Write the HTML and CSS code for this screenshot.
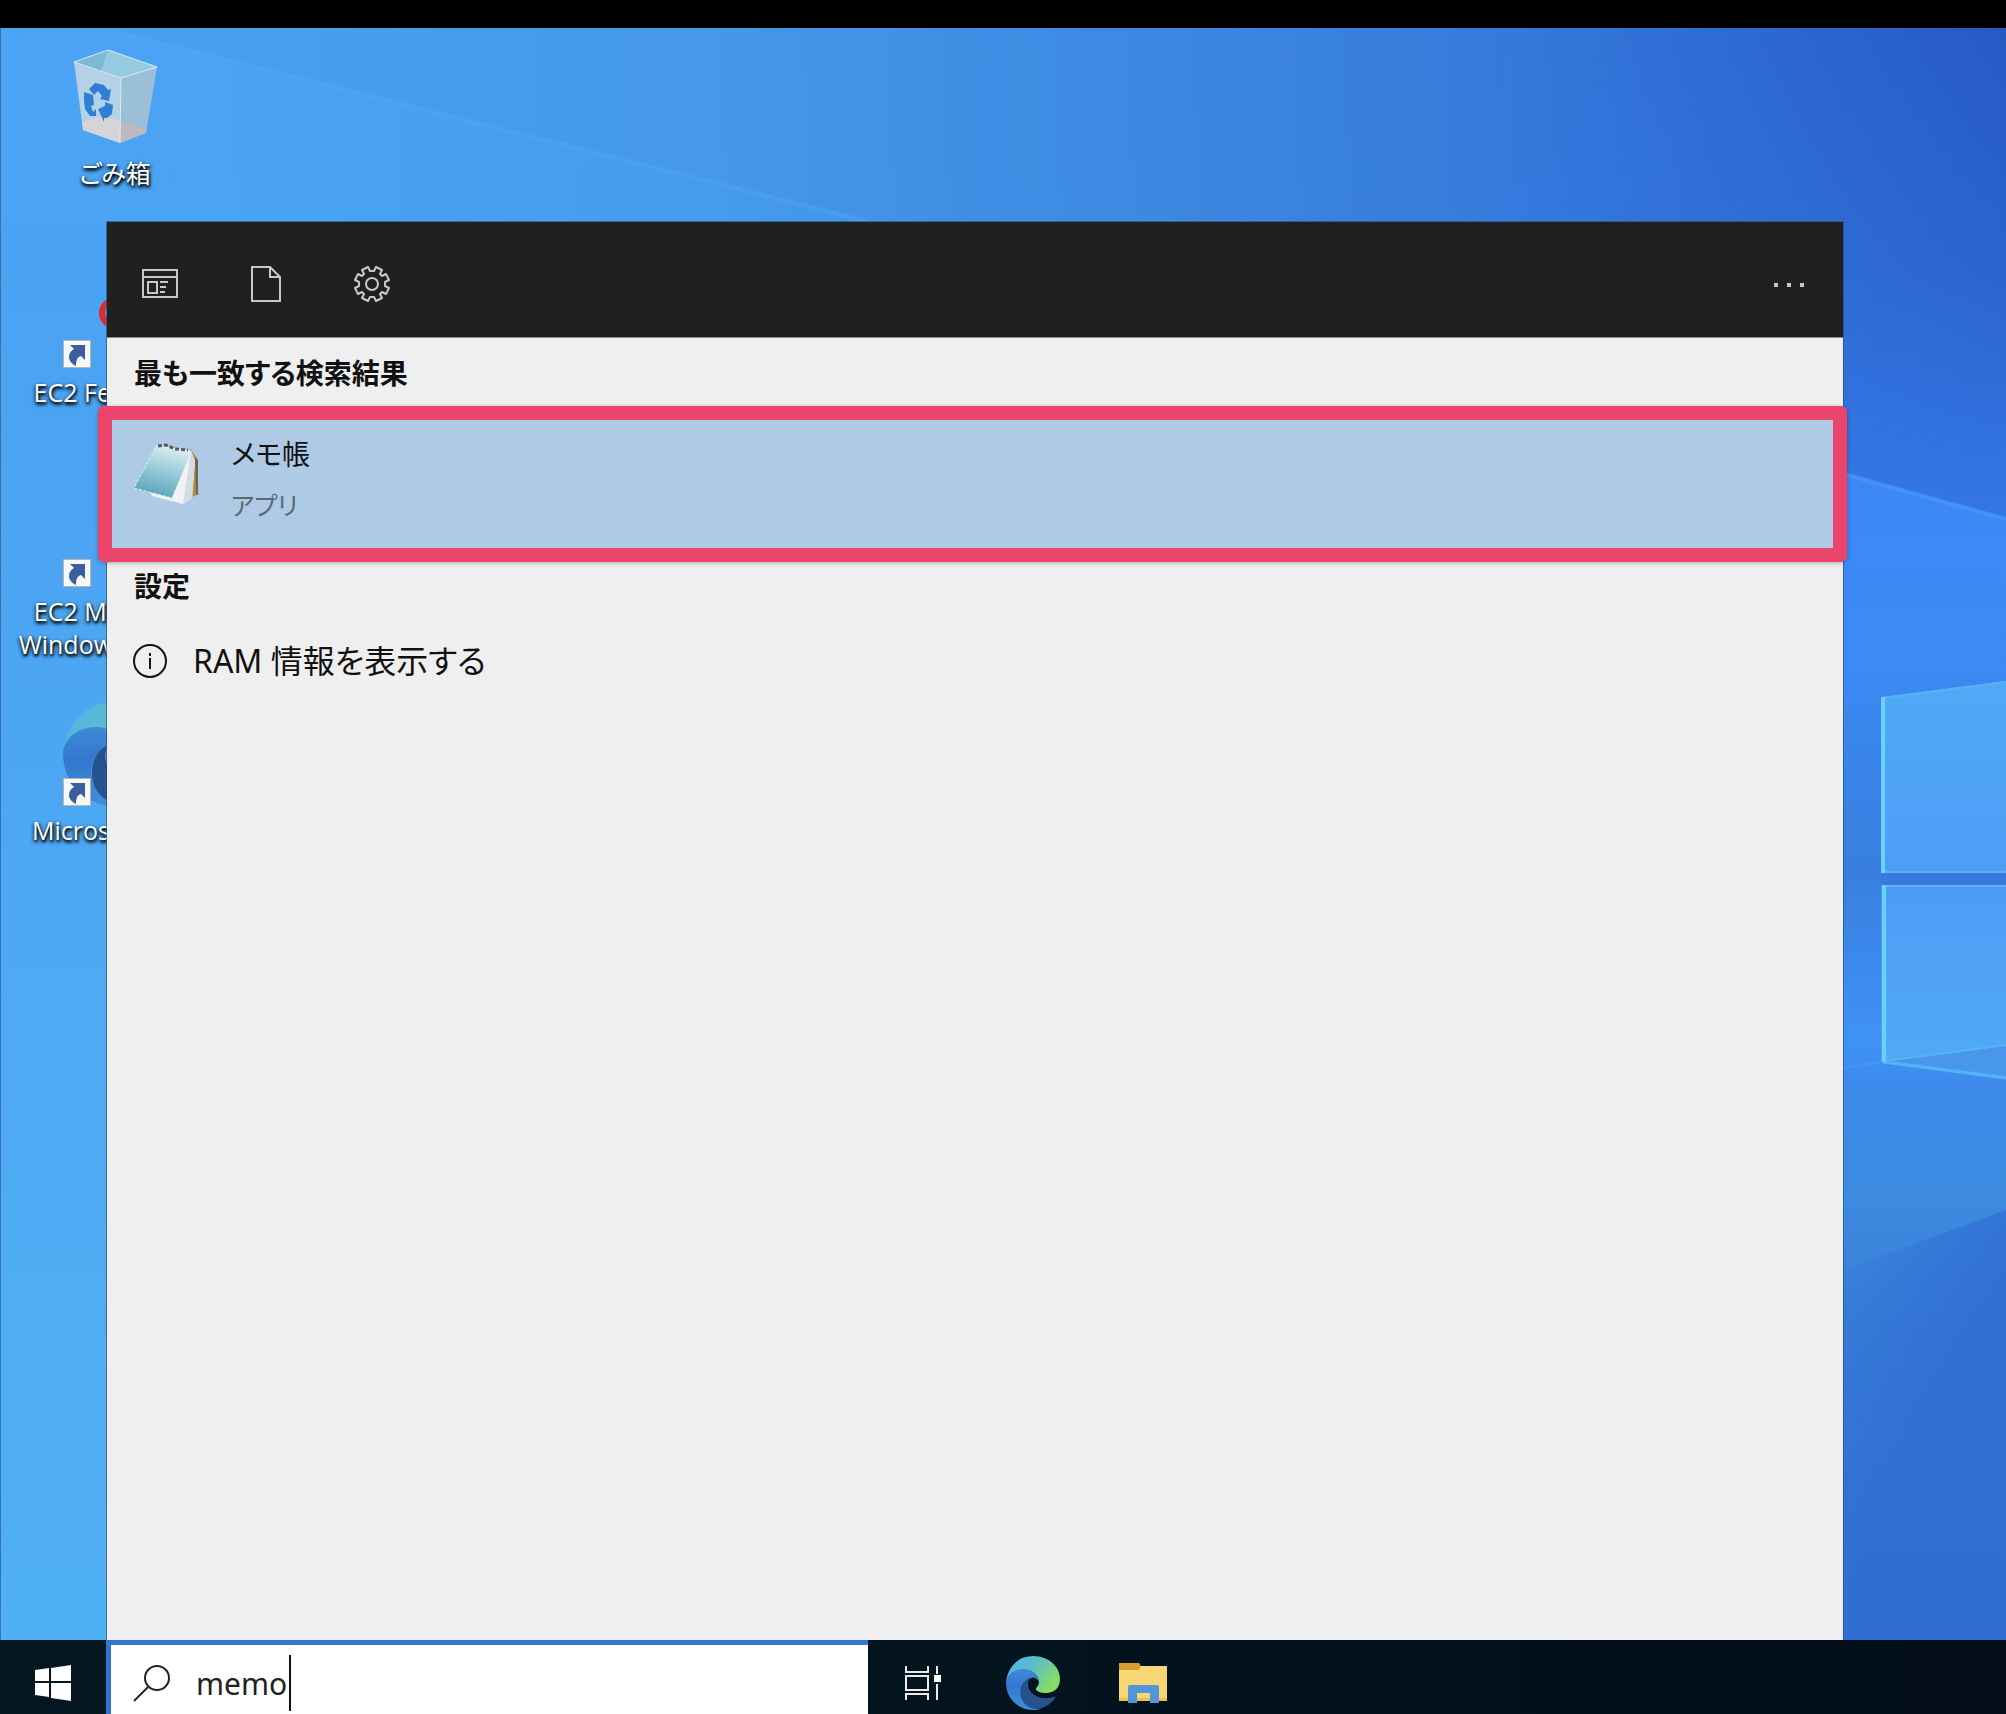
FILE: index.html
```html
<!DOCTYPE html>
<html lang="ja">
<head>
<meta charset="utf-8">
<title>メモ帳</title>
<link rel="stylesheet" href="styles.css">
</head>

<body>

<svg class="defs" aria-hidden="true">
  <defs>
    <linearGradient id="edge-top" x1="0" y1="0" x2="1" y2="0.5">
      <stop offset="0" stop-color="#4fb2f0"/>
      <stop offset="0.5" stop-color="#5cbccb"/>
      <stop offset="1" stop-color="#86dd66"/>
    </linearGradient>
    <linearGradient id="edge-left" x1="0" y1="0" x2="0" y2="1">
      <stop offset="0" stop-color="#3f8ad6"/>
      <stop offset="0.4" stop-color="#3478cf"/>
      <stop offset="1" stop-color="#3f8edd"/>
    </linearGradient>
    <symbol id="edge" viewBox="0 0 54 54">
      <path fill="url(#edge-top)" d="M0 25C3 9 13 0 27 0c16 0 27 11 27 23 0 9-6 14-14 14-6 0-10-2-10-4s3-3 3-7c0-7-7-12-16-12S3 18 0 25z"/>
      <path fill="url(#edge-left)" d="M0 27c0-8 8-14 17-14s16 6 16 13c-3-5-6-5-8-4-9 3-11 11-10 18 2 8 11 14 19 13-3 1-5 1-7 1C12 54 0 42 0 27z"/>
      <path fill="#27528f" d="M25 22c-7 2-10 8-10 15 0 9 7 17 18 16 7-2 13-6 16-11 1-1 0-2-2-1-11 4-25-2-25-13 0-3 1-5 3-6z"/>
    </symbol>
    <symbol id="shortcut" viewBox="0 0 28 28">
      <path fill="#f7f8fa" stroke="#b9b4ae" stroke-width="1" d="M.5.5h27v27H.5z"/>
      <path fill="#3c5e9f" d="M7 5h15v15l-4-4c-4 1-5 5-5 10-4-2-7-5-7-9s2-6 5-8z"/>
    </symbol>
  </defs>
</svg>

<div class="top-strip"></div>

<main class="desktop">
  <svg class="wallpaper" viewBox="0 28 2006 1612" preserveAspectRatio="none" aria-hidden="true">
    <defs>
      <linearGradient id="sky" x1="0" y1="120" x2="2006" y2="28" gradientUnits="userSpaceOnUse">
        <stop offset="0" stop-color="#4aa2f2"/>
        <stop offset="0.35" stop-color="#4598ea"/>
        <stop offset="0.6" stop-color="#3c86e0"/>
        <stop offset="0.75" stop-color="#357adb"/>
        <stop offset="0.87" stop-color="#2d69d2"/>
        <stop offset="1" stop-color="#2759c3"/>
      </linearGradient>
      <linearGradient id="sky-glow" x1="0" y1="28" x2="0" y2="520" gradientUnits="userSpaceOnUse">
        <stop offset="0" stop-color="#357be8" stop-opacity="0"/>
        <stop offset="0.5" stop-color="#357be8" stop-opacity="0.3"/>
        <stop offset="1" stop-color="#357be8" stop-opacity="0.9"/>
      </linearGradient>
      <linearGradient id="left-side" x1="0" y1="0" x2="0" y2="1">
        <stop offset="0" stop-color="#4aa2f2"/>
        <stop offset="1" stop-color="#50b0f4"/>
      </linearGradient>
      <linearGradient id="beam" x1="100" y1="0" x2="870" y2="0" gradientUnits="userSpaceOnUse">
        <stop offset="0" stop-color="#4ba6f5" stop-opacity="0.6"/>
        <stop offset="1" stop-color="#4ba6f5" stop-opacity="0.1"/>
      </linearGradient>
      <linearGradient id="right-side" x1="0" y1="440" x2="0" y2="1640" gradientUnits="userSpaceOnUse">
        <stop offset="0" stop-color="#3d87f5"/>
        <stop offset="0.18" stop-color="#3c8af4"/>
        <stop offset="0.36" stop-color="#387fdf"/>
        <stop offset="0.5" stop-color="#4092f6"/>
        <stop offset="0.54" stop-color="#3d8aec"/>
        <stop offset="0.63" stop-color="#3d8adf"/>
        <stop offset="0.75" stop-color="#387fd8"/>
        <stop offset="1" stop-color="#347ad4"/>
      </linearGradient>
      <linearGradient id="corner" x1="1843" y1="1190" x2="2006" y2="1270" gradientUnits="userSpaceOnUse">
        <stop offset="0" stop-color="#2f6bd4" stop-opacity="0"/>
        <stop offset="1" stop-color="#2f6bd4" stop-opacity="0.8"/>
      </linearGradient>
      <linearGradient id="pane" x1="0" y1="0" x2="0" y2="1">
        <stop offset="0" stop-color="#51a9f7"/>
        <stop offset="1" stop-color="#4d9df5"/>
      </linearGradient>
      <linearGradient id="pane-low" x1="0" y1="0" x2="0" y2="1">
        <stop offset="0" stop-color="#4d9bf6"/>
        <stop offset="1" stop-color="#52abf5"/>
      </linearGradient>
    </defs>
    <path fill="url(#sky)" d="M0 28h2006v1612H0z"/>
    <path fill="url(#sky-glow)" d="M1500 28h506v500h-506z"/>
    <path fill="url(#left-side)" d="M0 222h200v1418H0z"/>
    <path fill="url(#beam)" d="M0 28h100l770 194H0z"/>
    <path fill="none" stroke="#52adf8" stroke-width="4" opacity="0.35" d="M100 28l770 194"/>
    <path fill="url(#right-side)" d="M1700 436L1843 474l163 44v1122H1700z"/>
    <path fill="none" stroke="#4796fa" stroke-width="4" opacity="0.8" d="M1843 474l163 45"/>
    <path fill="url(#corner)" d="M1843 1270l163-60v430h-163z"/>
    <path fill="#3779de" d="M1881 873h125v12h-125z"/>
    <path fill="url(#pane)" d="M1881 697l125-16v192h-125z"/>
    <path fill="url(#pane-low)" d="M1881 885h125v193l-125-16z"/>
    <path fill="#4997ec" d="M1890 1061l116-15v30z"/>
    <path fill="none" stroke="#58b2f6" stroke-width="2" d="M1883 698l123-16M1884 872h122M1884 886h122M1884 1061l122-16"/>
    <path fill="none" stroke="#50b5f5" stroke-width="3" d="M1883 1062l123 16"/>
    <path fill="none" stroke="#67d3f7" stroke-width="4" d="M1883 697v176M1884 885v177"/>
    <path fill="none" stroke="#4a9af5" stroke-width="3" opacity="0.6" d="M1843 1068l38-6"/>
  </svg>

  <div class="shortcuts">
    <a class="shortcut" href="#">
      <svg class="shortcut-icon" viewBox="0 0 104 104" aria-hidden="true">
        <path fill="#b4d1e5" d="M11 17L58 33l-1 65-37-13z"/>
        <path fill="#9cbfd8" d="M58 33l36-11-11 66-26 10z"/>
        <path fill="#d6d4d8" d="M19 77l20-6 18 5v22l-37-13z"/>
        <path fill="#bcb9bf" d="M57 76l27 8-1 4-26 10z"/>
        <path fill="#7db8d8" d="M11 17L45 5l49 17-36 11z"/>
        <path fill="#94cbe0" d="M45 5l49 17-36 11-20-7z"/>
        <path fill="none" stroke="#dceaf3" stroke-width="1" d="M11 17L45 5l49 17-36 11zM58 33l-1 64"/>
        <path fill="#2f7fd6" d="M26 44l6-6 9 2 4 5 3-1-2 12-9-2 2-3-4-5-4 4zM21 47l9 3 1 10-3 1 2 6 3-3v7h-6l-5-7-1-9zM35 64l7-3v-4l8 3-1 9-5 4h-3v4z"/>
      </svg>
      <span class="shortcut-name">ごみ箱</span>
    </a>
    <a class="shortcut shortcut-covered" href="#">
      <svg class="shortcut-icon" viewBox="0 0 104 104" aria-hidden="true">
        <circle cx="52" cy="49" r="13" fill="none" stroke="#d92b35" stroke-width="6"/>
        <use href="#shortcut" x="0" y="76" width="28" height="28"/>
      </svg>
      <span class="shortcut-name">EC2 Fee</span>
    </a>
    <a class="shortcut shortcut-covered" href="#">
      <svg class="shortcut-icon" viewBox="0 0 104 104" aria-hidden="true">
        <use href="#shortcut" x="0" y="76" width="28" height="28"/>
      </svg>
      <span class="shortcut-name">EC2 Mic<br>Windows</span>
    </a>
    <a class="shortcut shortcut-covered" href="#">
      <svg class="shortcut-icon" viewBox="0 0 104 104" aria-hidden="true">
        <use href="#edge" width="104" height="104"/>
        <use href="#shortcut" x="0" y="76" width="28" height="28"/>
      </svg>
      <span class="shortcut-name">Microso</span>
    </a>
  </div>

  <section class="search-panel">
    <header class="filters">
      <button class="filter" type="button" aria-label="アプリ">
        <svg width="36" height="36" viewBox="0 0 36 36" fill="none" stroke="#c8c8c8" stroke-width="2">
          <path d="M1 4h34v27H1zM1 11h34M6 16h9v11H6zM18 16h8M18 21h6M18 26h5"/>
        </svg>
      </button>
      <button class="filter" type="button" aria-label="ドキュメント">
        <svg width="36" height="36" viewBox="0 0 36 36" fill="none" stroke="#c8c8c8" stroke-width="2">
          <path d="M4 1h18l10 10v24H4zM22 1v10h10"/>
        </svg>
      </button>
      <button class="filter" type="button" aria-label="設定">
        <svg width="36" height="36" viewBox="-18 -18 36 36" fill="none" stroke="#c8c8c8" stroke-width="2" stroke-linejoin="round">
          <path d="M2-13L4-17l6 3-2 4 2 2 4-2 3 6-4 2v4l4 2-3 6-4-2-2 2 2 4-6 3-2-4h-4l-2 4-6-3 2-4-2-2-4 2-3-6 4-2v-4l-4-2 3-6 4 2 2-2-2-4 6-3 2 4z"/>
          <circle r="6"/>
        </svg>
      </button>
      <button class="filter filter-more" type="button" aria-label="その他">
        <svg width="36" height="36" viewBox="0 0 36 36" fill="#c8c8c8">
          <path d="M2 17h4v4H2zM15 17h4v4h-4zM28 17h4v4h-4z"/>
        </svg>
      </button>
    </header>

    <h2 class="group-title">最も一致する検索結果</h2>
    <button class="best-match" type="button">
      <svg class="notepad" viewBox="0 0 68 64" aria-hidden="true">
        <defs>
          <linearGradient id="page" x1="0.6" y1="0" x2="0.3" y2="1">
            <stop offset="0" stop-color="#dceff3"/>
            <stop offset="0.5" stop-color="#94c8d6"/>
            <stop offset="1" stop-color="#55a0ba"/>
          </linearGradient>
        </defs>
        <path fill="#7f98ad" d="M47 58l21-6-8-3z" opacity="0.6"/>
        <path fill="#b98d47" d="M57 7l7 9 1 36-8 4z"/>
        <path fill="#6f6250" d="M62 15l3 3v34l-2 1z"/>
        <path fill="#f1f3f3" d="M24 3l34 6 4 10-3 37-9 6-31-8-4-8z"/>
        <path fill="#d3dde2" d="M58 9l4 10-3 37-9 6z"/>
        <path fill="url(#page)" stroke="#e1f0f2" stroke-width="1" stroke-dasharray="3 2" d="M24 3l34 8-19 45L1 46z"/>
        <path fill="none" stroke="#565b5c" stroke-width="3" stroke-dasharray="4 2" d="M25 4l8-1 9 4 13 1"/>
      </svg>
      <span class="match-text">
        <span class="match-name">メモ帳</span>
        <span class="match-kind">アプリ</span>
      </span>
      <span class="marker"></span>
    </button>

    <h2 class="group-title group-title-small">設定</h2>
    <button class="setting" type="button">
      <svg width="34" height="34" viewBox="0 0 34 34" fill="none" stroke="#111" stroke-width="2" aria-hidden="true">
        <circle cx="17" cy="17" r="16"/>
        <path d="M17 14v11M17 9v3"/>
      </svg>
      <span>RAM 情報を表示する</span>
    </button>
  </section>
</main>

<footer class="taskbar">
  <button class="start" type="button" aria-label="スタート">
    <svg width="38" height="38" viewBox="0 0 38 38" fill="#fff" aria-hidden="true">
      <path d="M1 6l14-2v13H1zM17 4l20-3v16H17zM1 19h14v14L1 31zM17 19h20v18l-20-3z"/>
    </svg>
  </button>
  <label class="search-box">
    <svg width="38" height="38" viewBox="0 0 38 38" fill="none" stroke="#222" stroke-width="2" aria-hidden="true">
      <circle cx="24" cy="14" r="12"/>
      <path d="M15 23L1 37"/>
    </svg>
    <input class="search-input" type="text" value="memo" aria-label="検索">
    <span class="caret"></span>
  </label>
  <button class="task" type="button" aria-label="タスク ビュー">
    <svg width="38" height="38" viewBox="0 0 38 38" fill="none" stroke="#e8eaec" stroke-width="2" aria-hidden="true">
      <path d="M2 2v6h22V2M2 12h22v14H2zM2 36v-6h22v6M33 2v8M33 20v16"/>
      <path fill="#fff" stroke="none" d="M30 11h7v7h-7z"/>
    </svg>
  </button>
  <button class="task" type="button" aria-label="Microsoft Edge">
    <svg width="54" height="54" aria-hidden="true"><use href="#edge"/></svg>
  </button>
  <button class="task" type="button" aria-label="エクスプローラー">
    <svg width="50" height="42" viewBox="0 0 50 42" aria-hidden="true">
      <path fill="#f8d675" d="M1 4h48v35H1z"/>
      <path fill="#f0c04e" d="M1 36h48v3H1z"/>
      <path fill="#d99c33" d="M1 1h20l2 3-2 4H1z"/>
      <path fill="#5396d8" d="M12 23h27q2 0 2 2v16h-9V31H19v10h-9V25q0-2 2-2z"/>
    </svg>
  </button>
</footer>

</body>
</html>
```

FILE: styles.css
```css
* {
  box-sizing: border-box;
}

body {
  margin: 0;
  min-height: 100vh;
  display: flex;
  flex-direction: column;
  background: #000;
  color: #111;
  font-family: "Noto Sans", "Noto Sans CJK JP", sans-serif;
  font-size: 30px;
  line-height: 40px;
  font-feature-settings: "palt";
}

button {
  margin: 0;
  padding: 0;
  border: none;
  background: none;
  color: inherit;
  font: inherit;
  font-feature-settings: inherit;
  text-align: left;
}

svg {
  display: block;
  flex: none;
}

.defs {
  position: absolute;
  width: 0;
  height: 0;
}

.top-strip {
  height: 28px;
}

/* desktop */

.desktop {
  position: relative;
  flex: 1;
  min-height: 960px;
  padding: 17px 14px;
  overflow: hidden;
  border-left: 1px solid #3973ad;
}

.wallpaper {
  position: absolute;
  inset: 0;
  width: 100%;
  height: 100%;
}

.shortcuts {
  position: relative;
  width: 200px;
  display: grid;
  grid-auto-rows: 219px;
}

.shortcut {
  display: flex;
  flex-direction: column;
  align-items: center;
  gap: 8px;
  color: #fff;
  text-align: center;
  text-decoration: none;
  text-shadow: 1px 2px 3px #000, 0 2px 4px #000;
}

.shortcut-icon {
  width: 104px;
  height: 104px;
}

.shortcut-name {
  font-family: "Open Sans", "Noto Sans CJK JP", sans-serif;
  font-size: 25px;
  line-height: 33px;
  white-space: nowrap;
}

.shortcut-covered .shortcut-name {
  align-self: flex-end;
  margin-right: 90px;
  text-align: right;
}

/* search results window */

.search-panel {
  position: absolute;
  top: 194px;
  right: 163px;
  bottom: 0;
  left: 106px;
  background: #efefef;
  box-shadow: 0 0 0 1px rgba(40, 70, 100, 0.6);
}

.filters {
  display: flex;
  height: 116px;
  padding-top: 9px;
  background: #202020;
  border-bottom: 1px solid #8a8a8a;
}

.filter {
  width: 106px;
  display: flex;
  align-items: center;
  justify-content: center;
}

.filter-more {
  margin-left: auto;
}

.group-title {
  margin: 0;
  padding: 15px 27px 13px;
  font-size: 28px;
  line-height: 40px;
  font-weight: bold;
}

.group-title-small {
  padding: 4px 27px;
}

.best-match {
  position: relative;
  display: flex;
  align-items: flex-start;
  gap: 30px;
  width: 100%;
  height: 156px;
  padding: 28px 26px;
  background: #afcae5;
}

.notepad {
  width: 68px;
  height: 64px;
  margin-top: 8px;
}

.match-text {
  display: flex;
  flex-direction: column;
  gap: 11px;
}

.match-name {
  font-size: 28px;
}

.match-kind {
  color: #5b6874;
  font-size: 25px;
}

.marker {
  position: absolute;
  inset: 0 -4px 0 -9px;
  border: 14px solid #eb456c;
  border-radius: 6px;
  box-shadow: 0 1px 4px rgba(0, 0, 0, 0.3);
}

.setting {
  display: flex;
  align-items: center;
  gap: 26px;
  width: 100%;
  height: 102px;
  padding: 0 26px;
  font-size: 32px;
}

/* taskbar */

.taskbar {
  display: flex;
  height: 74px;
  background: linear-gradient(90deg, #04161f, #03141f 50%, #020d18);
}

.start,
.task {
  display: flex;
  align-items: center;
  justify-content: center;
  padding-top: 12px;
}

.start {
  width: 106px;
}

.task {
  width: 110px;
}

.search-box {
  width: 38%;
  display: flex;
  align-items: center;
  padding: 7px 0 0 22px;
  background: #fff;
  border-top: 5px solid #2f76d0;
  border-left: 5px solid #2f76d0;
}

.search-input {
  width: 93px;
  height: 52px;
  margin-left: 25px;
  padding: 0;
  border: none;
  outline: none;
  background: none;
  color: #222;
  font: inherit;
}

.caret {
  width: 2px;
  height: 56px;
  background: #111;
}
```
